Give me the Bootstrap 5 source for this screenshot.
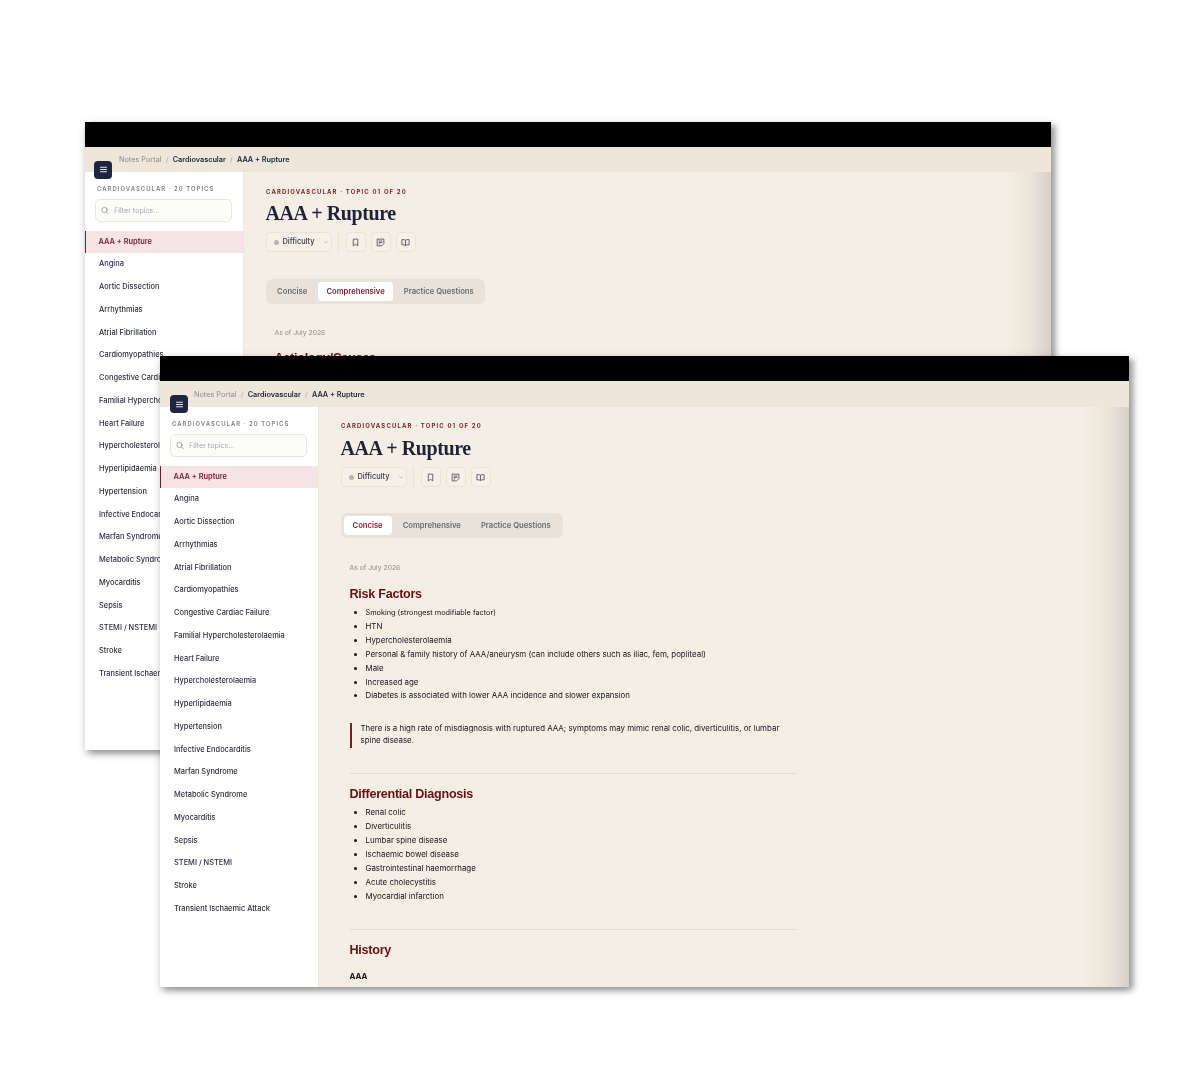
<!DOCTYPE html>
<html lang="en">
<head>
<meta charset="utf-8">
<title>Notes Portal</title>
<link rel="stylesheet" href="https://cdn.jsdelivr.net/npm/bootstrap@5.3.0/dist/css/bootstrap.min.css">
<style>
html,body{height:100%;background:#fff;margin:0}
body{font-family:Inter,"Liberation Sans",sans-serif;position:relative;overflow:hidden;width:1200px;height:1089px}
.app-win{position:absolute;display:flex;flex-direction:column;overflow:hidden;background:#fff;box-shadow:5px 3px 6px rgba(40,40,40,.36),0 5px 7px rgba(40,40,40,.18),0 0 10px rgba(0,0,0,.07);filter:blur(.3px)}
.win-back{left:85px;top:122px;width:966px;height:628px}
.win-front{left:160px;top:356px;width:969px;height:631px}
.top-black{height:25px;flex:none;background:#000}
.crumb-band{height:26px;flex:none;background:#eee6da;padding:1px 0 0 34px;display:flex;align-items:center}
.win-back .crumb-band{height:25px}
.crumb-band .breadcrumb{margin:0;font-size:7.3px;--bs-breadcrumb-divider-color:#bdb8ad;--bs-breadcrumb-item-padding-x:4.2px;--bs-breadcrumb-item-active-color:#2a2d3a}
.crumb-band .breadcrumb-item{color:#8c8c8c;line-height:1}
.crumb-band .breadcrumb-item.strong-crumb{color:#25283a;font-weight:600}
.menu-btn{position:absolute;left:10px;top:39px;width:18px;height:18px;padding:0;border:0;border-radius:4px;background:#1f2540;display:flex;align-items:center;justify-content:center;z-index:2}
.win-back .menu-btn{left:9px;top:38.500px}
.win-body{flex:1;display:flex;min-height:0}
.side-panel{width:158.5px;flex:none;background:#fff;border-right:1px solid #ebe8e2;padding-top:12px}
.side-head{font-size:5.9px;font-weight:600;letter-spacing:1.04px;color:#7d8089;line-height:9px;padding-left:12px;text-transform:uppercase}
.filter-box{margin:6px 10.500px 8.700px 10px;height:23px;border:1px solid #e8e6e1;border-radius:5px;background:#fcfcfb;display:flex;align-items:center;padding-left:5px;gap:5px}
.filter-box .form-control{border:0;background:transparent;padding:0;font-size:7.1px;box-shadow:none;min-height:0;height:12px;color:#999}
.filter-box .form-control::placeholder{color:#a6a6a6}
.topic-list{--bs-list-group-bg:transparent;border-radius:0}
.topic-list .list-group-item{border:0;padding:0 0 0 14px;height:22.76px;line-height:22.76px;font-size:7.43px;color:#2e3140;white-space:nowrap;font-weight:500;background:transparent}
.topic-list .list-group-item.is-current{background:#f5e3e6;color:#7a1c2e;font-weight:600;border-left:1.5px solid #7a1c2e;padding-left:12.5px}
.main-pane{flex:1;background:#f5eee4;position:relative;padding:15px 22px;overflow:hidden;min-width:0}
.win-back .main-pane{padding-top:15.500px}
.main-pane::after{content:"";position:absolute;top:0;right:0;bottom:0;width:46px;background:linear-gradient(90deg,rgba(205,203,190,0),rgba(205,203,190,.25) 55%,rgba(200,198,188,.72));pointer-events:none}
.eyebrow{font-size:5.9px;font-weight:700;letter-spacing:1.18px;color:#7a1c2e;line-height:8px;text-transform:uppercase;padding-left:.5px}
.page-title{font-family:"Liberation Serif",serif;font-weight:700;font-size:20px;line-height:25px;color:#1f2338;margin:6px 0 6px;letter-spacing:-.4px}
.win-back .page-title{margin:5px 0 6.500px}
.ctrl-row{display:flex;align-items:center;height:20px}
.diff-btn{height:20px;width:66px;padding:0 0 0 7px;display:flex;align-items:center;gap:4px;border:1px solid #e9e3d8;border-radius:4px;background:#f6f0e7;font-size:7.4px;font-weight:500;color:#3a3c48;--bs-btn-font-size:7.4px}
.dot-grey{width:5px;height:5px;border-radius:50%;background:#b7b5ae;flex:none}
.ctrl-sep{width:1px;height:20px;background:#e8e2d7;margin:0 6.5px}
.icon-sq{width:20px;height:20px;margin-right:5px;padding:0;border:1px solid #e9e3d8;border-radius:4px;background:#f6f0e7;display:flex;align-items:center;justify-content:center}
.tab-rail{display:inline-flex;margin-top:26px;height:25px;padding:3px;gap:2px;background:#e8e3da;border-radius:6px;--bs-nav-link-padding-y:0;flex-wrap:nowrap}
.win-back .tab-rail{margin-top:27px}
.tab-rail .nav-link{font-size:7.65px;font-weight:600;color:#6b6b6b;line-height:19px;height:19px;padding:0 9px;border-radius:4px;white-space:nowrap;background:transparent}
.win-back .tab-rail .nav-link{padding:0 8.6px}
.tab-rail .nav-link.active{background:#fff;color:#7a1c2e}
.note-body{width:447px;margin-left:9px;padding-top:25px}
.win-back .note-body{padding-top:24px}
.as-of{font-size:6.8px;color:#8d8d88;line-height:10px;margin-bottom:13px}
.win-back .as-of{margin-bottom:12px}
.note-h{font-family:"Liberation Sans",sans-serif;font-size:12.6px;font-weight:700;color:#6b0f14;line-height:16px;margin:0 0 4px;letter-spacing:-.27px}
.note-list{margin:0;padding-left:16px;font-size:7.9px;line-height:13.9px;color:#141418;font-weight:400}
.note-list li::marker{font-size:8px}
.note-list .item-small{font-size:7.3px}
.note-call{margin:19.5px 0 0;border-left:2px solid #7a1c2e;padding-left:9px;font-size:7.9px;line-height:11.8px;color:#141418;height:25px}
.note-rule{margin:25.5px 0 12px;border:0;border-top:1px solid #e0ddd3;opacity:1}
.note-sub{font-size:7.9px;font-weight:700;color:#15151a;line-height:11px;margin:13px 0 0}
</style>
</head>
<body>

<div class="app-win win-back">
  <div class="top-black"></div>
  <nav class="crumb-band"><ol class="breadcrumb"><li class="breadcrumb-item">Notes Portal</li><li class="breadcrumb-item strong-crumb">Cardiovascular</li><li class="breadcrumb-item strong-crumb active">AAA + Rupture</li></ol></nav>
  <button class="menu-btn" type="button" aria-label="Menu"><svg width="9" height="9" viewBox="0 0 12 12" fill="none" stroke="#fff" stroke-width="1.2" stroke-linecap="round"><path d="M2 3h8M2 6h8M2 9h8"/></svg></button>
  <div class="win-body">
    <aside class="side-panel">
      <div class="side-head">Cardiovascular · 20 Topics</div>
      <div class="filter-box"><svg width="9" height="9" viewBox="0 0 12 12" fill="none" stroke="#8a8a8a" stroke-width="1.1" stroke-linecap="round"><circle cx="5.2" cy="5.2" r="3.9"/><path d="M8.2 8.2 11 11"/></svg><input class="form-control" placeholder="Filter topics..." aria-label="Filter topics"></div>
      <div class="list-group topic-list">
        <a class="list-group-item is-current">AAA + Rupture</a><a class="list-group-item">Angina</a><a class="list-group-item">Aortic Dissection</a><a class="list-group-item">Arrhythmias</a><a class="list-group-item">Atrial Fibrillation</a><a class="list-group-item">Cardiomyopathies</a><a class="list-group-item">Congestive Cardiac Failure</a><a class="list-group-item">Familial Hypercholesterolaemia</a><a class="list-group-item">Heart Failure</a><a class="list-group-item">Hypercholesterolaemia</a><a class="list-group-item">Hyperlipidaemia</a><a class="list-group-item">Hypertension</a><a class="list-group-item">Infective Endocarditis</a><a class="list-group-item">Marfan Syndrome</a><a class="list-group-item">Metabolic Syndrome</a><a class="list-group-item">Myocarditis</a><a class="list-group-item">Sepsis</a><a class="list-group-item">STEMI / NSTEMI</a><a class="list-group-item">Stroke</a><a class="list-group-item">Transient Ischaemic Attack</a>
      </div>
    </aside>
    <main class="main-pane">
      <div class="eyebrow">Cardiovascular · Topic 01 of 20</div>
      <h1 class="page-title">AAA + Rupture</h1>
      <div class="ctrl-row">
        <button class="btn diff-btn" type="button"><span class="dot-grey"></span>Difficulty<svg class="ms-1" width="6" height="6" viewBox="0 0 8 8" fill="none" stroke="#b0aea6" stroke-width="1"><path d="m1.5 3 2.5 2.5L6.5 3"/></svg></button>
        <span class="ctrl-sep"></span>
        <button class="btn icon-sq" type="button" aria-label="Bookmark"><svg width="9" height="9" viewBox="0 0 12 12" fill="none" stroke="#3a3c48" stroke-width="1" stroke-linejoin="round"><path d="M3 1.5h6v9L6 8.3 3 10.500z"/></svg></button>
        <button class="btn icon-sq" type="button" aria-label="Note"><svg width="9" height="9" viewBox="0 0 12 12" fill="none" stroke="#3a3c48" stroke-width="1" stroke-linejoin="round"><path d="M1.500 1.500h9v6l-3 3h-6zM3.500 4h5M3.500 6h5M3.500 8h2"/></svg></button>
        <button class="btn icon-sq" type="button" aria-label="Read"><svg width="9" height="9" viewBox="0 0 12 12" fill="none" stroke="#3a3c48" stroke-width="1" stroke-linejoin="round"><path d="M6 3C5 2 3 2 1.200 2.200v7C3 9 5 9 6 10c1-1 3-1 4.800-.8v-7C9 2 7 2 6 3zM6 3v7"/></svg></button>
      </div>
      <ul class="nav tab-rail">
        <li class="nav-item"><a class="nav-link">Concise</a></li>
        <li class="nav-item"><a class="nav-link active">Comprehensive</a></li>
        <li class="nav-item"><a class="nav-link">Practice Questions</a></li>
      </ul>
      <div class="note-body">
        <div class="as-of">As of July 2026</div>
        <h2 class="note-h">Aetiology/Causes</h2>
      </div>
    </main>
  </div>
</div>

<div class="app-win win-front">
  <div class="top-black"></div>
  <nav class="crumb-band"><ol class="breadcrumb"><li class="breadcrumb-item">Notes Portal</li><li class="breadcrumb-item strong-crumb">Cardiovascular</li><li class="breadcrumb-item strong-crumb active">AAA + Rupture</li></ol></nav>
  <button class="menu-btn" type="button" aria-label="Menu"><svg width="9" height="9" viewBox="0 0 12 12" fill="none" stroke="#fff" stroke-width="1.2" stroke-linecap="round"><path d="M2 3h8M2 6h8M2 9h8"/></svg></button>
  <div class="win-body">
    <aside class="side-panel">
      <div class="side-head">Cardiovascular · 20 Topics</div>
      <div class="filter-box"><svg width="9" height="9" viewBox="0 0 12 12" fill="none" stroke="#8a8a8a" stroke-width="1.1" stroke-linecap="round"><circle cx="5.2" cy="5.2" r="3.9"/><path d="M8.2 8.2 11 11"/></svg><input class="form-control" placeholder="Filter topics..." aria-label="Filter topics"></div>
      <div class="list-group topic-list">
        <a class="list-group-item is-current">AAA + Rupture</a><a class="list-group-item">Angina</a><a class="list-group-item">Aortic Dissection</a><a class="list-group-item">Arrhythmias</a><a class="list-group-item">Atrial Fibrillation</a><a class="list-group-item">Cardiomyopathies</a><a class="list-group-item">Congestive Cardiac Failure</a><a class="list-group-item">Familial Hypercholesterolaemia</a><a class="list-group-item">Heart Failure</a><a class="list-group-item">Hypercholesterolaemia</a><a class="list-group-item">Hyperlipidaemia</a><a class="list-group-item">Hypertension</a><a class="list-group-item">Infective Endocarditis</a><a class="list-group-item">Marfan Syndrome</a><a class="list-group-item">Metabolic Syndrome</a><a class="list-group-item">Myocarditis</a><a class="list-group-item">Sepsis</a><a class="list-group-item">STEMI / NSTEMI</a><a class="list-group-item">Stroke</a><a class="list-group-item">Transient Ischaemic Attack</a>
      </div>
    </aside>
    <main class="main-pane">
      <div class="eyebrow">Cardiovascular · Topic 01 of 20</div>
      <h1 class="page-title">AAA + Rupture</h1>
      <div class="ctrl-row">
        <button class="btn diff-btn" type="button"><span class="dot-grey"></span>Difficulty<svg class="ms-1" width="6" height="6" viewBox="0 0 8 8" fill="none" stroke="#b0aea6" stroke-width="1"><path d="m1.5 3 2.5 2.5L6.5 3"/></svg></button>
        <span class="ctrl-sep"></span>
        <button class="btn icon-sq" type="button" aria-label="Bookmark"><svg width="9" height="9" viewBox="0 0 12 12" fill="none" stroke="#3a3c48" stroke-width="1" stroke-linejoin="round"><path d="M3 1.5h6v9L6 8.3 3 10.500z"/></svg></button>
        <button class="btn icon-sq" type="button" aria-label="Note"><svg width="9" height="9" viewBox="0 0 12 12" fill="none" stroke="#3a3c48" stroke-width="1" stroke-linejoin="round"><path d="M1.500 1.500h9v6l-3 3h-6zM3.500 4h5M3.500 6h5M3.500 8h2"/></svg></button>
        <button class="btn icon-sq" type="button" aria-label="Read"><svg width="9" height="9" viewBox="0 0 12 12" fill="none" stroke="#3a3c48" stroke-width="1" stroke-linejoin="round"><path d="M6 3C5 2 3 2 1.200 2.200v7C3 9 5 9 6 10c1-1 3-1 4.800-.8v-7C9 2 7 2 6 3zM6 3v7"/></svg></button>
      </div>
      <ul class="nav tab-rail">
        <li class="nav-item"><a class="nav-link active">Concise</a></li>
        <li class="nav-item"><a class="nav-link">Comprehensive</a></li>
        <li class="nav-item"><a class="nav-link">Practice Questions</a></li>
      </ul>
      <div class="note-body">
        <div class="as-of">As of July 2026</div>
        <h2 class="note-h">Risk Factors</h2>
        <ul class="note-list">
          <li class="item-small">Smoking (strongest modifiable factor)</li>
          <li>HTN</li>
          <li>Hypercholesterolaemia</li>
          <li>Personal &amp; family history of AAA/aneurysm (can include others such as iliac, fem, popliteal)</li>
          <li>Male</li>
          <li>Increased age</li>
          <li>Diabetes is associated with lower AAA incidence and slower expansion</li>
        </ul>
        <blockquote class="note-call">There is a high rate of misdiagnosis with ruptured AAA; symptoms may mimic renal colic, diverticulitis, or lumbar spine disease.</blockquote>
        <hr class="note-rule">
        <h2 class="note-h">Differential Diagnosis</h2>
        <ul class="note-list">
          <li>Renal colic</li>
          <li>Diverticulitis</li>
          <li>Lumbar spine disease</li>
          <li>Ischaemic bowel disease</li>
          <li>Gastrointestinal haemorrhage</li>
          <li>Acute cholecystitis</li>
          <li>Myocardial infarction</li>
        </ul>
        <hr class="note-rule">
        <h2 class="note-h">History</h2>
        <p class="note-sub">AAA</p>
      </div>
    </main>
  </div>
</div>

<script src="https://cdn.jsdelivr.net/npm/bootstrap@5.3.0/dist/js/bootstrap.bundle.min.js"></script>
</body>
</html>
